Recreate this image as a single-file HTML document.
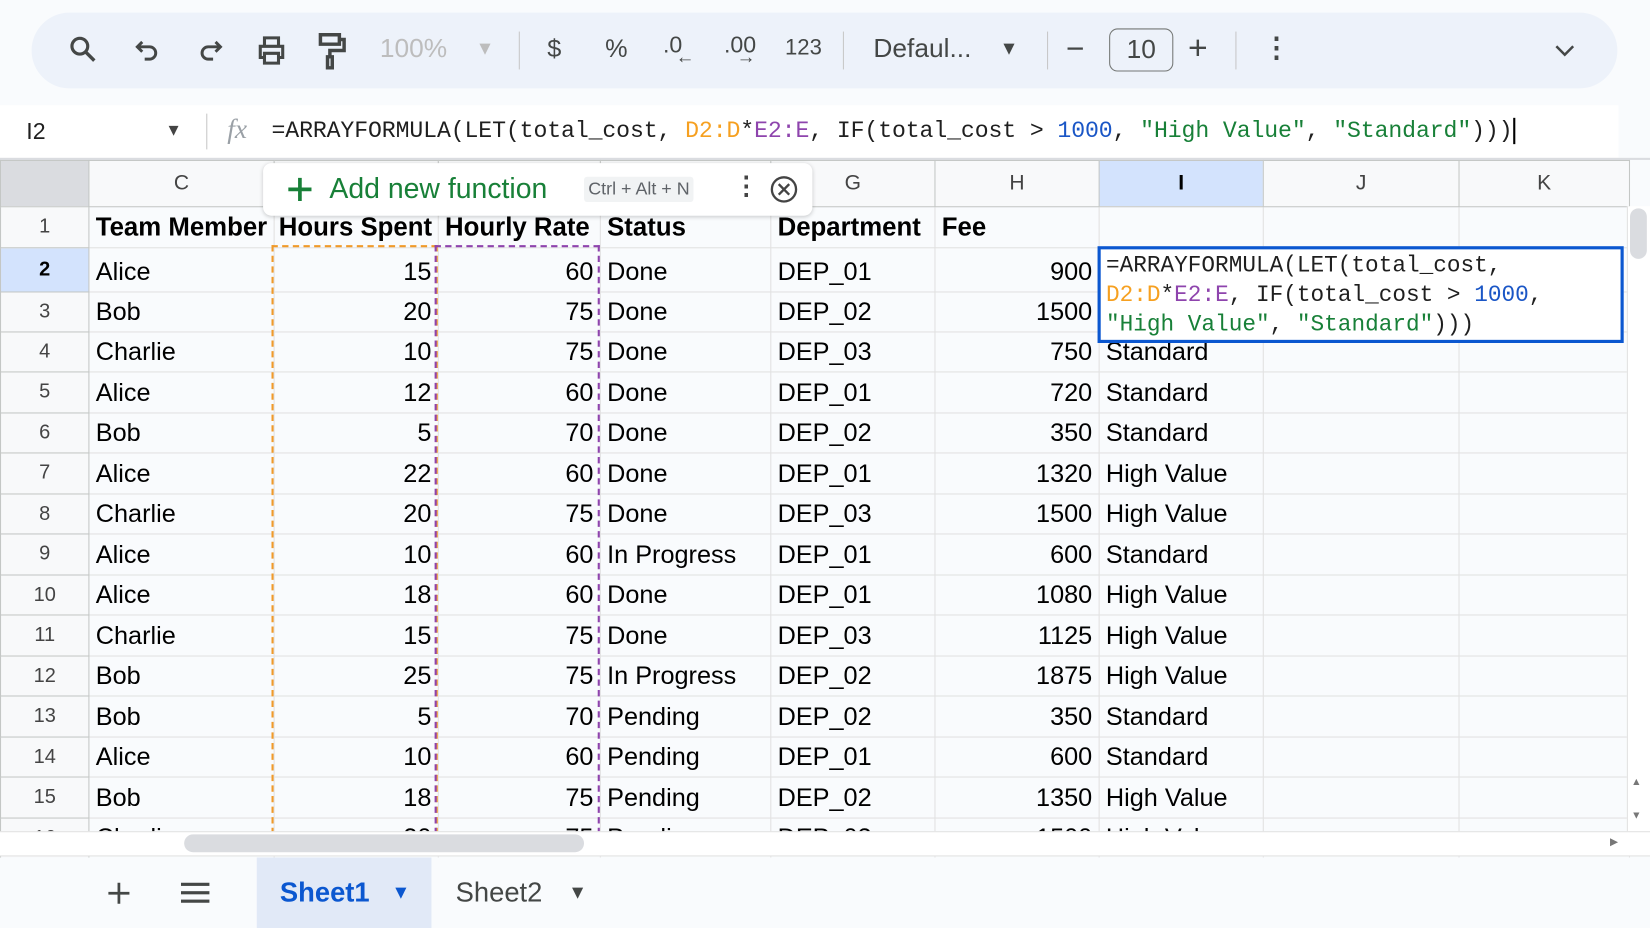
<!DOCTYPE html>
<html><head><meta charset="utf-8"><style>
*{margin:0;padding:0;box-sizing:border-box}
html,body{width:1650px;height:928px;overflow:hidden;background:#f9fbfd;font-family:"Liberation Sans",sans-serif}
#w{position:absolute;left:0;top:0;width:1568px;height:882px;transform:scale(1.05230,1.05215);transform-origin:0 0;background:#f9fbfd}
.a{position:absolute}
.tb{left:30px;top:12px;width:1507px;height:72px;border-radius:36px;background:#edf2fa}
.ic{position:absolute;color:#444746;font-size:23px}
.sep{position:absolute;top:30px;width:1px;height:36px;background:#c7c7c7}
.mono{font-family:"Liberation Mono",monospace;font-size:21.6px}
table{border-collapse:collapse;position:absolute;left:0;top:152px;table-layout:fixed}
td{border:1px solid #e1e1e1;font-size:24px;color:#000;padding:0 6px;white-space:nowrap;overflow:hidden;vertical-align:bottom;padding-bottom:4px}
td.rh{text-align:center;color:#444;font-size:19px;background:#f8f9fa;border-color:#c4c7c5;vertical-align:middle;padding:0}
tr.hd td{text-align:center;color:#444;font-size:20px;background:#f8f9fa;border-color:#c4c7c5;vertical-align:middle;padding:0;height:44px}
.r{text-align:right}
.b{font-weight:bold;font-size:24.5px}
</style></head><body><div id="w">
<div class="a tb"></div>
<svg class="a" style="left:64px;top:32px" width="30" height="30" viewBox="0 0 24 24"><circle cx="9.5" cy="9.5" r="6" fill="none" stroke="#444746" stroke-width="2.4"/><path d="M14 14l6.5 6.5" stroke="#444746" stroke-width="2.6"/></svg>
<svg class="a" style="left:127px;top:34px" width="28" height="28" viewBox="0 0 24 24"><path d="M7 5L3 9l4 4M3 9h10a5 5 0 010 10H9" fill="none" stroke="#444746" stroke-width="2.4"/></svg>
<svg class="a" style="left:185px;top:34px" width="28" height="28" viewBox="0 0 24 24"><path d="M17 5l4 4-4 4M21 9H11a5 5 0 000 10h4" fill="none" stroke="#444746" stroke-width="2.4"/></svg>
<svg class="a" style="left:242px;top:32px" width="32" height="32" viewBox="0 0 24 24"><path d="M7 8V3h10v5M7 17H4v-8h16v8h-3M7 14h10v7H7z" fill="none" stroke="#444746" stroke-width="2.2"/></svg>
<svg class="a" style="left:300px;top:30px" width="30" height="36" viewBox="0 0 20 24"><path d="M3 2h12v6H3zM15 5h3v7H9v4M7.5 16h3v7h-3z" fill="none" stroke="#444746" stroke-width="2.2"/></svg>
<div class="ic" style="left:361px;top:32px;font-size:25px;color:#bdbdbd">100%</div>
<div class="ic" style="left:452px;top:36px;font-size:18px;color:#bdbdbd">▼</div>
<div class="sep" style="left:493px"></div>
<div class="ic" style="left:520px;top:33px;font-size:24px">$</div>
<div class="ic" style="left:575px;top:33px;font-size:24px">%</div>
<div class="ic" style="left:630px;top:30px;font-size:22px">.0<span style="position:absolute;left:12px;top:14px;font-size:18px">←</span></div>
<div class="ic" style="left:688px;top:30px;font-size:22px">.00<span style="position:absolute;left:12px;top:14px;font-size:18px">→</span></div>
<div class="ic" style="left:746px;top:34px;font-size:21px">123</div>
<div class="sep" style="left:801px"></div>
<div class="ic" style="left:830px;top:32px;font-size:25px">Defaul...</div>
<div class="ic" style="left:950px;top:36px;font-size:18px">▼</div>
<div class="sep" style="left:995px"></div>
<div class="ic" style="left:1013px;top:30px;font-size:30px">−</div>
<div class="a" style="left:1054px;top:27px;width:61px;height:41px;border:1.5px solid #747775;border-radius:8px;text-align:center;font-size:25px;line-height:38px;color:#444746">10</div>
<div class="ic" style="left:1129px;top:27px;font-size:32px">+</div>
<div class="sep" style="left:1174px"></div>
<div class="ic" style="left:1200px;top:30px;font-size:26px;font-weight:bold">⋮</div>
<svg class="a" style="left:1476px;top:40px" width="22" height="16" viewBox="0 0 22 16"><path d="M3 4l8 8 8-8" fill="none" stroke="#444746" stroke-width="2.4"/></svg>
<div class="a" style="left:0;top:100px;width:1538px;height:50px;background:#fff"></div>
<div class="a" style="left:25px;top:112px;font-size:22px;color:#1f1f1f">I2</div>
<div class="a" style="left:157px;top:116px;font-size:16px;color:#444">▼</div>
<div class="a" style="left:196px;top:108px;width:1px;height:34px;background:#c7c7c7"></div>
<div class="a" style="left:216px;top:108px;font-family:'Liberation Serif',serif;font-style:italic;font-size:26px;color:#9aa0a6">fx</div>
<div class="a mono" style="left:258px;top:112px;color:#1f1f1f;white-space:nowrap;font-size:22px;letter-spacing:-0.1px">=ARRAYFORMULA(LET(total_cost, <span style="color:#f6a020">D2:D</span>*<span style="color:#8e44ad">E2:E</span>, IF(total_cost &gt; <span style="color:#1a56c6">1000</span>, <span style="color:#188038">"High Value"</span>, <span style="color:#188038">"Standard"</span>)))<span style="border-left:2px solid #000;margin-left:1px"></span></div>
<div class="a" style="left:0;top:150px;width:1568px;height:2px;background:#dadce0"></div>
<table>
<colgroup><col style="width:84px"><col style="width:175px"><col style="width:156px"><col style="width:154px"><col style="width:162px"><col style="width:156px"><col style="width:156px"><col style="width:156px"><col style="width:186px"><col style="width:162px"></colgroup>
<tr class="hd"><td style="background:#dadce0"></td><td>C</td><td>D</td><td>E</td><td>F</td><td>G</td><td>H</td><td style="background:#d3e3fd;color:#000;font-weight:bold">I</td><td>J</td><td>K</td></tr>
<tr style="height:39px"><td class="rh">1</td><td class="b">Team Member</td><td class="b" style="padding:0 2px 4px 4px">Hours Spent</td><td class="b">Hourly Rate</td><td class="b">Status</td><td class="b">Department</td><td class="b">Fee</td><td></td><td></td><td></td></tr>
<tr style="height:42px"><td class="rh" style="background:#d3e3fd;color:#000;font-weight:bold">2</td><td>Alice</td><td class="r">15</td><td class="r">60</td><td>Done</td><td>DEP_01</td><td class="r">900</td><td></td><td></td><td></td></tr>
<tr style="height:38px"><td class="rh">3</td><td>Bob</td><td class="r">20</td><td class="r">75</td><td>Done</td><td>DEP_02</td><td class="r">1500</td><td></td><td></td><td></td></tr>
<tr style="height:38px"><td class="rh">4</td><td>Charlie</td><td class="r">10</td><td class="r">75</td><td>Done</td><td>DEP_03</td><td class="r">750</td><td>Standard</td><td></td><td></td></tr>
<tr style="height:39px"><td class="rh">5</td><td>Alice</td><td class="r">12</td><td class="r">60</td><td>Done</td><td>DEP_01</td><td class="r">720</td><td>Standard</td><td></td><td></td></tr>
<tr style="height:38px"><td class="rh">6</td><td>Bob</td><td class="r">5</td><td class="r">70</td><td>Done</td><td>DEP_02</td><td class="r">350</td><td>Standard</td><td></td><td></td></tr>
<tr style="height:39px"><td class="rh">7</td><td>Alice</td><td class="r">22</td><td class="r">60</td><td>Done</td><td>DEP_01</td><td class="r">1320</td><td>High Value</td><td></td><td></td></tr>
<tr style="height:38px"><td class="rh">8</td><td>Charlie</td><td class="r">20</td><td class="r">75</td><td>Done</td><td>DEP_03</td><td class="r">1500</td><td>High Value</td><td></td><td></td></tr>
<tr style="height:39px"><td class="rh">9</td><td>Alice</td><td class="r">10</td><td class="r">60</td><td>In Progress</td><td>DEP_01</td><td class="r">600</td><td>Standard</td><td></td><td></td></tr>
<tr style="height:38px"><td class="rh">10</td><td>Alice</td><td class="r">18</td><td class="r">60</td><td>Done</td><td>DEP_01</td><td class="r">1080</td><td>High Value</td><td></td><td></td></tr>
<tr style="height:39px"><td class="rh">11</td><td>Charlie</td><td class="r">15</td><td class="r">75</td><td>Done</td><td>DEP_03</td><td class="r">1125</td><td>High Value</td><td></td><td></td></tr>
<tr style="height:38px"><td class="rh">12</td><td>Bob</td><td class="r">25</td><td class="r">75</td><td>In Progress</td><td>DEP_02</td><td class="r">1875</td><td>High Value</td><td></td><td></td></tr>
<tr style="height:39px"><td class="rh">13</td><td>Bob</td><td class="r">5</td><td class="r">70</td><td>Pending</td><td>DEP_02</td><td class="r">350</td><td>Standard</td><td></td><td></td></tr>
<tr style="height:38px"><td class="rh">14</td><td>Alice</td><td class="r">10</td><td class="r">60</td><td>Pending</td><td>DEP_01</td><td class="r">600</td><td>Standard</td><td></td><td></td></tr>
<tr style="height:39px"><td class="rh">15</td><td>Bob</td><td class="r">18</td><td class="r">75</td><td>Pending</td><td>DEP_02</td><td class="r">1350</td><td>High Value</td><td></td><td></td></tr>
<tr style="height:38px"><td class="rh">16</td><td>Charlie</td><td class="r">20</td><td class="r">75</td><td>Pending</td><td>DEP_03</td><td class="r">1500</td><td>High Value</td><td></td><td></td></tr>
</table>
<div class="a" style="left:258px;top:233px;width:158px;height:600px;border:2.5px dashed #f09a2a;border-bottom:none"></div>
<div class="a" style="left:413px;top:233px;width:157px;height:600px;border:2.5px dashed #8e44ad;border-bottom:none"></div>
<div class="a mono" style="left:1043px;top:234px;width:500px;height:92px;border:3px solid #0b57d0;background:#fff;padding:2px 5px;line-height:28px;color:#1f1f1f;white-space:nowrap">=ARRAYFORMULA(LET(total_cost,<br><span style="color:#f6a020">D2:D</span>*<span style="color:#8e44ad">E2:E</span>, IF(total_cost &gt; <span style="color:#1a56c6">1000</span>,<br><span style="color:#188038">"High Value"</span>, <span style="color:#188038">"Standard"</span>)))</div>
<div class="a" style="left:250px;top:155px;width:522px;height:50px;background:#fff;border-radius:8px;box-shadow:0 1px 4px rgba(0,0,0,.2)"></div>
<svg class="a" style="left:272px;top:167px" width="26" height="26" viewBox="0 0 26 26"><path d="M13 2v22M2 13h22" stroke="#188038" stroke-width="3.5"/></svg>
<div class="a" style="left:313px;top:164px;font-size:27px;color:#188038">Add new function</div>
<div class="a" style="left:555px;top:168px;font-size:17px;color:#5f6368;background:#f1f3f4;padding:2px 4px;border-radius:3px">Ctrl + Alt + N</div>
<div class="a" style="left:697px;top:163px;font-size:24px;color:#444;font-weight:bold">⋮</div>
<svg class="a" style="left:731px;top:166px" width="28" height="28" viewBox="0 0 28 28"><circle cx="14" cy="14" r="11.5" fill="none" stroke="#444" stroke-width="2.2"/><path d="M9 9l10 10M19 9L9 19" stroke="#444" stroke-width="2.2"/></svg>
<div class="a" style="left:1546px;top:196px;width:22px;height:595px;background:#fff;border-left:1px solid #e1e1e1"></div>
<div class="a" style="left:1549px;top:198px;width:16px;height:48px;background:#dadce0;border-radius:8px"></div>
<div class="a" style="left:1550px;top:738px;font-size:10px;color:#777">▲</div>
<div class="a" style="left:1550px;top:770px;font-size:10px;color:#777">▼</div>
<div class="a" style="left:0;top:790px;width:1568px;height:24px;background:#fff;border-top:1px solid #e1e1e1;border-bottom:1px solid #e1e1e1"></div>
<div class="a" style="left:175px;top:793px;width:380px;height:17px;background:#dadce0;border-radius:9px"></div>
<div class="a" style="left:1530px;top:795px;font-size:10px;color:#777">▶</div>
<div class="a" style="left:0;top:815px;width:1568px;height:67px;background:#f9fbfd"></div>
<svg class="a" style="left:101px;top:837px" width="24" height="24" viewBox="0 0 24 24"><path d="M12 2v20M2 12h20" stroke="#444746" stroke-width="2.6"/></svg>
<div class="a" style="left:172px;top:839px;width:27px;height:3px;background:#444746;box-shadow:0 8px 0 #444746,0 16px 0 #444746"></div>
<div class="a" style="left:244px;top:815px;width:166px;height:67px;background:#e1e9f7"></div>
<div class="a" style="left:266px;top:833px;font-size:26px;font-weight:bold;color:#0b57d0">Sheet1</div>
<div class="a" style="left:372px;top:838px;font-size:18px;color:#0b57d0">▼</div>
<div class="a" style="left:433px;top:833px;font-size:26px;color:#444746">Sheet2</div>
<div class="a" style="left:540px;top:838px;font-size:18px;color:#444746">▼</div>
</div></body></html>
